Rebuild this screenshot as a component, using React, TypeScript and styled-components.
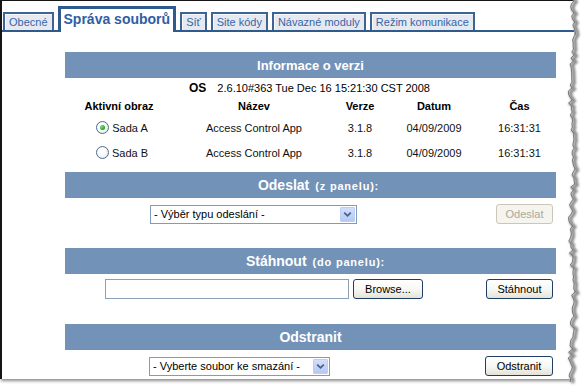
import React from 'react';
import styled, { createGlobalStyle } from 'styled-components';

const GlobalStyle = createGlobalStyle`
  html, body { margin: 0; padding: 0; background: #fff; }
  body { font-family: "Liberation Sans", Arial, sans-serif; color: #000; }
`;

const Frame = styled.div`
  position: relative;
  width: 588px;
  height: 386px;
  overflow: hidden;
  background: #fff;
`;

const Sheet = styled.div`
  width: 574px;
  height: 379px;
  box-sizing: border-box;
  border-left: 2px solid #151515;
  border-top: 1px solid #151515;
  box-shadow: 1px 2px 3px rgba(0, 0, 0, 0.45);
  background: #fff;
  overflow: hidden;
`;

const TabBar = styled.div`
  display: flex;
  align-items: flex-end;
  gap: 4px;
  padding: 5px 0 0 1px;
  border-bottom: 2px solid #2f5b8c;
`;

const Tab = styled.div<{ $active?: boolean }>`
  box-sizing: border-box;
  white-space: nowrap;
  ${(p) =>
    p.$active
      ? `
    height: 26px;
    margin-bottom: -2px;
    padding: 0 3px 3px;
    border: 3px solid #2f5b8c;
    border-bottom: none;
    background: #fff;
    color: #2f5ea3;
    font-size: 14px;
    font-weight: bold;
    line-height: 20px;
  `
      : `
    height: 18px;
    padding: 0 4px;
    border: 2px solid #3d6494;
    border-bottom: none;
    background: #e6e9f0;
    box-shadow: inset 1px 1px 0 #f7f8fb;
    color: #3567a8;
    font-size: 11px;
    line-height: 16px;
  `}
`;

const Main = styled.div`
  width: 491px;
  margin-left: 63px;
`;

const Section = styled.section<{ $mt: number }>`
  margin-top: ${(p) => p.$mt}px;
`;

const SectionHeader = styled.div<{ $shift?: number }>`
  height: 26px;
  display: flex;
  align-items: center;
  justify-content: center;
  padding-left: ${(p) => p.$shift ?? 0}px;
  background: #7292b7;
  color: #fff;
  font-weight: bold;
`;

const Title = styled.span<{ $size: number }>`
  font-size: ${(p) => p.$size}px;
`;

const Sub = styled.span`
  font-size: 11px;
  letter-spacing: 0.8px;
  margin-left: 6px;
  margin-top: 2px;
`;

const InfoGrid = styled.div`
  display: grid;
  grid-template-columns: 108px 162px 50px 98px 73px;
  grid-template-rows: 19px 18px 25px 25px;
  font-size: 11px;
`;

const OsRow = styled.div`
  grid-column: 1 / -1;
  display: flex;
  align-items: center;
  gap: 11px;
  padding-left: 124px;
`;

const OsLabel = styled.b`
  font-size: 12px;
`;

const HeadCell = styled.div`
  display: flex;
  align-items: center;
  justify-content: center;
  font-weight: bold;
  white-space: nowrap;
`;

const Cell = styled.div<{ $pl?: number }>`
  display: flex;
  align-items: center;
  justify-content: center;
  gap: 3px;
  padding-left: ${(p) => p.$pl ?? 0}px;
  color: #111;
  white-space: nowrap;
`;

const RadioCircle = styled.span<{ $checked?: boolean }>`
  box-sizing: border-box;
  width: 13px;
  height: 13px;
  border-radius: 50%;
  border: 1px solid #4a6d92;
  background: radial-gradient(circle at 40% 40%, #ffffff 30%, #e2e2dc 100%);
  display: flex;
  align-items: center;
  justify-content: center;
  &::after {
    content: '';
    display: ${(p) => (p.$checked ? 'block' : 'none')};
    width: 5px;
    height: 5px;
    border-radius: 50%;
    background: radial-gradient(circle at 35% 35%, #7be07b 0%, #22a022 70%);
  }
`;

const ActionRow = styled.div<{ $indent: number; $mt: number; $h: number }>`
  display: flex;
  align-items: center;
  justify-content: space-between;
  height: ${(p) => p.$h}px;
  margin-top: ${(p) => p.$mt}px;
  padding: 0 3px 0 ${(p) => p.$indent}px;
`;

const Group = styled.div`
  display: flex;
  align-items: center;
  gap: 4px;
`;

const SelectBox = styled.div<{ $w: number }>`
  box-sizing: border-box;
  width: ${(p) => p.$w}px;
  height: 19px;
  display: flex;
  align-items: center;
  justify-content: space-between;
  padding: 1px;
  border: 1px solid #7f9db9;
  background: #fff;
  font-size: 11px;
`;

const SelectText = styled.span`
  padding-left: 2px;
  white-space: nowrap;
`;

const SelectArrow = styled.span`
  box-sizing: border-box;
  width: 15px;
  height: 15px;
  display: flex;
  align-items: center;
  justify-content: center;
  border: 1px solid #bccdf6;
  border-radius: 1px;
  background: linear-gradient(180deg, #d2defc 0%, #b5c9f5 100%);
`;

const FileField = styled.div<{ $w: number }>`
  box-sizing: border-box;
  width: ${(p) => p.$w}px;
  height: 20px;
  border: 1px solid #8aa0b6;
  background: #fff;
`;

const XpButton = styled.button<{ $w: number }>`
  box-sizing: border-box;
  width: ${(p) => p.$w}px;
  height: 20px;
  padding: 0;
  border: 1px solid #1d3f66;
  border-radius: 3px;
  background: linear-gradient(180deg, #ffffff 0%, #f6f6f2 55%, #e4e2d8 100%);
  font-family: "Liberation Sans", Arial, sans-serif;
  font-size: 11px;
  color: #000;
  &:disabled {
    border-color: #c9c7ba;
    background: #f5f4ee;
    color: #aca899;
  }
`;

const EdgeSvg = styled.svg`
  position: absolute;
  left: 556px;
  top: 0;
  pointer-events: none;
`;

function TornEdge() {
  let s = 11;
  const rnd = () => {
    s = (s * 9301 + 49297) % 233280;
    return s / 233280;
  };
  const pts: [number, number][] = [];
  for (let y = -2; y <= 382; y += 3) {
    const x = 16 + Math.sin(y / 21) * 1.6 + (rnd() - 0.5) * 4.5;
    pts.push([x, y]);
  }
  const line = pts.map(([x, y]) => `${x.toFixed(1)},${y}`).join(' ');
  const shadow = pts.map(([x, y]) => `${(x + 2.2).toFixed(1)},${y + 1}`).join(' ');
  const poly = `${line} 32,386 32,-2`;
  return (
    <EdgeSvg width={32} height={386} viewBox="0 0 32 386">
      <defs>
        <filter id="blur" x="-50%" y="-5%" width="200%" height="110%">
          <feGaussianBlur stdDeviation="1" />
        </filter>
      </defs>
      <polygon points={poly} fill="#fff" />
      <polyline points={shadow} fill="none" stroke="#8c8c8c" strokeWidth={3.5} filter="url(#blur)" />
      <polyline points={line} fill="none" stroke="#6e6e6e" strokeWidth={0.9} />
    </EdgeSvg>
  );
}

const Chevron = () => (
  <svg width="9" height="7" viewBox="0 0 9 7">
    <path d="M1.2 1.6 L4.5 4.8 L7.8 1.6" fill="none" stroke="#4d6185" strokeWidth="1.8" />
  </svg>
);

const tabs = ['Obecné', 'Správa souborů', 'Síť', 'Site kódy', 'Návazné moduly', 'Režim komunikace'];

const rows = [
  { name: 'Sada A', checked: true },
  { name: 'Sada B', checked: false },
];

export default function App() {
  return (
    <Frame>
      <GlobalStyle />
      <Sheet>
        <TabBar>
          {tabs.map((t, i) => (
            <Tab key={t} $active={i === 1}>
              {t}
            </Tab>
          ))}
        </TabBar>
        <Main>
          <Section $mt={20}>
            <SectionHeader>
              <Title $size={13}>Informace o verzi</Title>
            </SectionHeader>
            <InfoGrid>
              <OsRow>
                <OsLabel>OS</OsLabel>
                <span>2.6.10#363 Tue Dec 16 15:21:30 CST 2008</span>
              </OsRow>
              <HeadCell>Aktivní obraz</HeadCell>
              <HeadCell>Název</HeadCell>
              <HeadCell>Verze</HeadCell>
              <HeadCell>Datum</HeadCell>
              <HeadCell>Čas</HeadCell>
              {rows.map((r) => (
                <React.Fragment key={r.name}>
                  <Cell $pl={6}>
                    <RadioCircle $checked={r.checked} />
                    <span>{r.name}</span>
                  </Cell>
                  <Cell>Access Control App</Cell>
                  <Cell>3.1.8</Cell>
                  <Cell>04/09/2009</Cell>
                  <Cell>16:31:31</Cell>
                </React.Fragment>
              ))}
            </InfoGrid>
          </Section>

          <Section $mt={7}>
            <SectionHeader $shift={16}>
              <Title $size={14}>Odeslat</Title>
              <Sub>(z panelu):</Sub>
            </SectionHeader>
            <ActionRow $indent={85} $mt={6} $h={20}>
              <SelectBox $w={207}>
                <SelectText>- Výběr typu odeslání -</SelectText>
                <SelectArrow>
                  <Chevron />
                </SelectArrow>
              </SelectBox>
              <XpButton $w={57} disabled>
                Odeslat
              </XpButton>
            </ActionRow>
          </Section>

          <Section $mt={24}>
            <SectionHeader $shift={10}>
              <Title $size={14}>Stáhnout</Title>
              <Sub>(do panelu):</Sub>
            </SectionHeader>
            <ActionRow $indent={40} $mt={4} $h={22}>
              <Group>
                <FileField $w={244} />
                <XpButton $w={70}>Browse...</XpButton>
              </Group>
              <XpButton $w={67}>Stáhnout</XpButton>
            </ActionRow>
          </Section>

          <Section $mt={24}>
            <SectionHeader>
              <Title $size={14}>Odstranit</Title>
            </SectionHeader>
            <ActionRow $indent={84} $mt={6} $h={20}>
              <SelectBox $w={181}>
                <SelectText>- Vyberte soubor ke smazání -</SelectText>
                <SelectArrow>
                  <Chevron />
                </SelectArrow>
              </SelectBox>
              <XpButton $w={68}>Odstranit</XpButton>
            </ActionRow>
          </Section>
        </Main>
      </Sheet>
      <TornEdge />
    </Frame>
  );
}
